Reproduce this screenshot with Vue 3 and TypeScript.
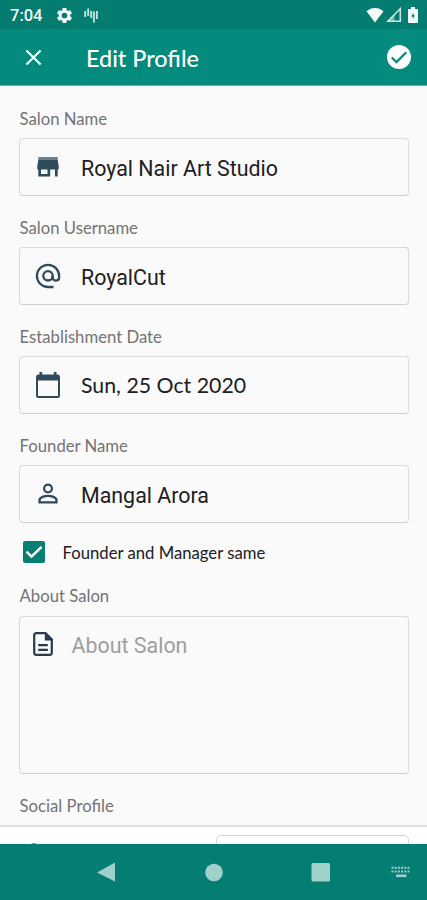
<script setup lang="ts">
interface Field {
  label: string
  value: string
  icon: 'store' | 'at' | 'calendar' | 'person'
  face: string
}

const fields: Field[] = [
  { label: 'Salon Name', value: 'Royal Nair Art Studio', icon: 'store', face: 'roboto' },
  { label: 'Salon Username', value: 'RoyalCut', icon: 'at', face: 'roboto' },
  { label: 'Establishment Date', value: 'Sun, 25 Oct 2020', icon: 'calendar', face: 'lato' },
  { label: 'Founder Name', value: 'Mangal Arora', icon: 'person', face: 'roboto' },
]

const keyColumns = [0, 1, 2, 3, 4, 5]
</script>

<template>
  <div class="screen">
    <header class="status">
      <span class="clock">7:04</span>
      <svg class="gear" viewBox="0 0 24 24"><path d="M19.14 12.94c.04-.3.06-.61.06-.94 0-.32-.02-.64-.07-.94l2.03-1.58a.49.49 0 0 0 .12-.61l-1.92-3.32a.49.49 0 0 0-.59-.22l-2.39.96c-.5-.38-1.03-.7-1.62-.94l-.36-2.54a.48.48 0 0 0-.48-.41h-3.84c-.24 0-.43.17-.47.41l-.36 2.54c-.59.24-1.13.57-1.62.94l-2.39-.96a.48.48 0 0 0-.59.22L2.74 8.87c-.12.21-.08.47.12.61l2.03 1.58c-.05.3-.09.63-.09.94s.02.64.07.94l-2.03 1.58a.49.49 0 0 0-.12.61l1.92 3.32c.12.22.37.29.59.22l2.39-.96c.5.38 1.03.7 1.62.94l.36 2.54c.05.24.24.41.48.41h3.84c.24 0 .44-.17.47-.41l.36-2.54c.59-.24 1.13-.56 1.62-.94l2.39.96c.22.08.47 0 .59-.22l1.92-3.32a.48.48 0 0 0-.12-.61zM12 15.6A3.6 3.6 0 1 1 12 8.4a3.6 3.6 0 0 1 0 7.2z" /></svg>
      <svg class="bars" viewBox="0 0 14 16"><path d="M1.200 4v6M4.200 1.500v7.500M7.200 4v7M9.900 4.500v11M12.900 4v8" /></svg>
      <span class="grow"></span>
      <svg class="wifi" viewBox="0 0 18 16"><path d="M9 15.500.500 4.300C2.900 2.200 5.800 1 9 1s6.100 1.200 8.500 3.300z" /></svg>
      <svg class="signal" viewBox="0 0 16 16"><path class="outline" d="M14.300 1.800v12.500H1.800z" /><path d="M1.800 14.300 8.500 7.500v6.800z" opacity=".45" /></svg>
      <svg class="battery" viewBox="0 0 10 16"><path d="M3 0h4v2h2q1 0 1 1v12q0 1-1 1H1q-1 0-1-1V3q0-1 1-1h2z" /><path class="bolt" d="M5.500 5.500 3.200 9.400h1.500v2.800l2.200-3.900H5.500z" /></svg>
    </header>

    <div class="appbar">
      <svg class="close" viewBox="0 0 18 18"><path d="M1.500 1.500l15 15M16.500 1.500l-15 15" /></svg>
      <h1>Edit Profile</h1>
      <svg class="done" viewBox="0 0 24 24"><circle cx="12" cy="12" r="12" /><path d="M4.800 12.500l4.700 4.600L19.300 7.200" /></svg>
    </div>

    <main>
      <section v-for="f in fields" :key="f.label" class="field">
        <label>{{ f.label }}</label>
        <div class="box">
          <svg v-if="f.icon === 'store'" class="icon" viewBox="0 0 26 26">
            <path d="M3.300 3h19.400v3H3.300z" opacity=".7" />
            <path d="M3.300 6h19.400L23.700 12v3.500h-1V22.500h-2.700v-7H15.200v7H3.300v-7h-1V12zM6 15.500v4.500h6.500v-4.500z" />
          </svg>
          <svg v-else-if="f.icon === 'at'" class="icon line" viewBox="0 0 26 26">
            <circle cx="13" cy="12.800" r="4.700" />
            <path d="M18.500 24H13A11.100 11.100 0 1 1 24.100 13v1.500c0 4.300-6.400 4.300-6.400 0v-2" />
          </svg>
          <svg v-else-if="f.icon === 'calendar'" class="icon" viewBox="0 0 26 26">
            <path d="M22.500 2.500h-1V0h-2.700v2.500H7.200V0H4.500v2.500h-1A2.500 2.500 0 0 0 1 5v18.500A2.500 2.500 0 0 0 3.500 26h19a2.500 2.500 0 0 0 2.500-2.500V5a2.500 2.500 0 0 0-2.500-2.500zm.5 21.500H3V8.500h20z" />
          </svg>
          <svg v-else class="icon line" viewBox="0 0 26 26">
            <circle cx="13" cy="7.500" r="3.900" />
            <path d="M4.500 21.400v-2.200c0-2.900 5.500-4.400 8.500-4.400s8.500 1.500 8.500 4.400v2.200z" />
          </svg>
          <span class="value" :class="f.face">{{ f.value }}</span>
        </div>
      </section>

      <div class="check">
        <span class="tick"><svg viewBox="0 0 22 22"><path d="M3.500 10.600l5 5L18.600 5.800" /></svg></span>
        <span class="check-text">Founder and Manager same</span>
      </div>

      <section class="about">
        <label>About Salon</label>
        <div class="area">
          <svg class="doc" viewBox="0 0 20 24">
            <path class="sheet" d="M12.500 1.200H3.200a2 2 0 0 0-2 2v17.600a2 2 0 0 0 2 2h13.600a2 2 0 0 0 2-2V7.500z" />
            <path class="fold" d="M11.800.5v8H19.500V7.200L13 .5z" />
            <path class="sheet" d="M5.200 13.200h9.600M5.200 17.800h9.600" />
          </svg>
          <span class="placeholder">About Salon</span>
        </div>
      </section>
      <h2>Social Profile</h2>
    </main>

    <div class="social">
      <span class="dot"></span>
      <span class="peek"></span>
    </div>

    <nav>
      <svg viewBox="0 0 427 56">
        <path d="M97 28.500 115 18.500v19z" />
        <circle cx="214" cy="28.500" r="8.800" />
        <rect x="311.500" y="19" width="18.500" height="18.500" rx="1.500" />
        <g class="keys">
          <rect v-for="c in keyColumns" :key="'a' + c" :x="391.500 + c * 3.200" y="22.800" width="2" height="2" />
          <rect v-for="c in keyColumns" :key="'b' + c" :x="391.500 + c * 3.200" y="26.500" width="2" height="2" />
          <rect x="396" y="30.500" width="10.500" height="2.600" />
        </g>
      </svg>
    </nav>
  </div>
</template>

<style>
body { margin: 0; overflow: hidden; }
</style>

<style scoped>
.screen {
  width: 427px; height: 900px; overflow: hidden; display: flex; flex-direction: column;
  background: #fafafa; font-family: Lato, sans-serif; color: #202020;
}
svg { display: block; flex: none; }
.status {
  height: 29px; flex: none; display: flex; align-items: center; box-sizing: border-box;
  padding: 1px 8px 0 10px; background: #047c70; fill: #f4fbfa; color: #f4fbfa;
}
.clock { width: 45px; padding-top: 2px; font: 500 16.500px/28px Roboto, sans-serif; }
.gear { width: 19px; height: 19px; }
.bars { width: 14px; height: 16px; margin-left: 10px; }
.bars path { stroke: #c3e2de; stroke-width: 1.900; }
.grow { flex: 1; }
.wifi { width: 18px; height: 16px; margin-right: 2px; }
.signal { width: 16px; height: 16px; margin-right: 6px; }
.outline { fill: none; stroke: #c9e5e1; stroke-width: 1.600; }
.battery { width: 10px; height: 16px; margin-right: 1px; }
.bolt { fill: #047c70; }
.appbar {
  height: 57px; flex: none; display: flex; align-items: center; box-sizing: border-box;
  padding: 0 16px 0 25px; background: #058b7d; border-bottom: 1px solid #6caaa2;
}
.close { width: 17px; height: 17px; margin-right: 1px; fill: none; stroke: #fff; stroke-width: 2.200; }
h1 { flex: 1; margin: 2px 0 0 43px; color: #fff; font-size: 23.400px; font-weight: 500; line-height: 30px; }
.done { width: 24px; height: 24px; fill: #fff; }
.done path { fill: none; stroke: #058b7d; stroke-width: 2.200; }
main { height: 739px; flex: none; padding: 0 18px 0 19px; box-sizing: border-box; }
label, h2 { display: block; margin: 0; padding-left: 0.600px; font-size: 16.700px; font-weight: 400; line-height: 20px; color: #737373; }
.field { height: 109px; padding-top: 23px; box-sizing: border-box; }
.box {
  height: 58px; margin-top: 9px; display: flex; align-items: center; box-sizing: border-box;
  border: 1px solid #dadada; border-bottom-color: #cfcfcf; border-radius: 4px; padding-left: 15px;
}
.icon { width: 26px; height: 26px; fill: #304b5b; }
.line { fill: none; stroke: #304b5b; stroke-width: 2.300; }
.value { margin: 3px 0 0 20px; font-size: 21.300px; line-height: 28px; white-space: nowrap; }
.lato { margin-top: 0; }
.roboto { font-family: Roboto, sans-serif; font-size: 21.400px; }
.check { height: 60px; display: flex; align-items: center; box-sizing: border-box; padding: 0 0 0 4px; font-size: 16.700px; }
.check-text { padding-top: 2px; }
.tick { width: 22px; height: 22px; margin-right: 17.500px; border-radius: 2px; background: #047f72; }
.tick svg { width: 22px; height: 22px; fill: none; stroke: #fff; stroke-width: 2.500; }
.about { margin-top: 4px; }
.area {
  height: 158px; margin-top: 10px; display: flex; align-items: flex-start; box-sizing: border-box;
  border: 1px solid #dadada; border-bottom-color: #cfcfcf; border-radius: 4px; padding: 15px 0 0 13px;
}
.doc { width: 20px; height: 24px; }
.sheet { fill: none; stroke: #273b4d; stroke-width: 2.200; }
.fold { fill: #273b4d; }
.placeholder { margin-left: 18.600px; font: 21.400px/28px Roboto, sans-serif; color: #9e9e9e; }
h2 { margin-top: 22px; }
.social {
  height: 19px; flex: none; display: flex; justify-content: space-between; overflow: hidden; box-sizing: border-box;
  padding: 9px 18px 0 30px; border-top: 2px solid #dedede; background: #fff;
}
.dot { width: 8px; height: 8px; margin-top: 7px; border-radius: 50%; background: #dc6a6a; }
.peek { width: 193px; height: 30px; margin-top: -1px; box-sizing: border-box; border: 1px solid #d6d6d6; border-radius: 5px; }
nav { height: 56px; flex: none; background: #047e72; }
nav svg { width: 427px; height: 56px; fill: #a0d0cb; }
</style>
